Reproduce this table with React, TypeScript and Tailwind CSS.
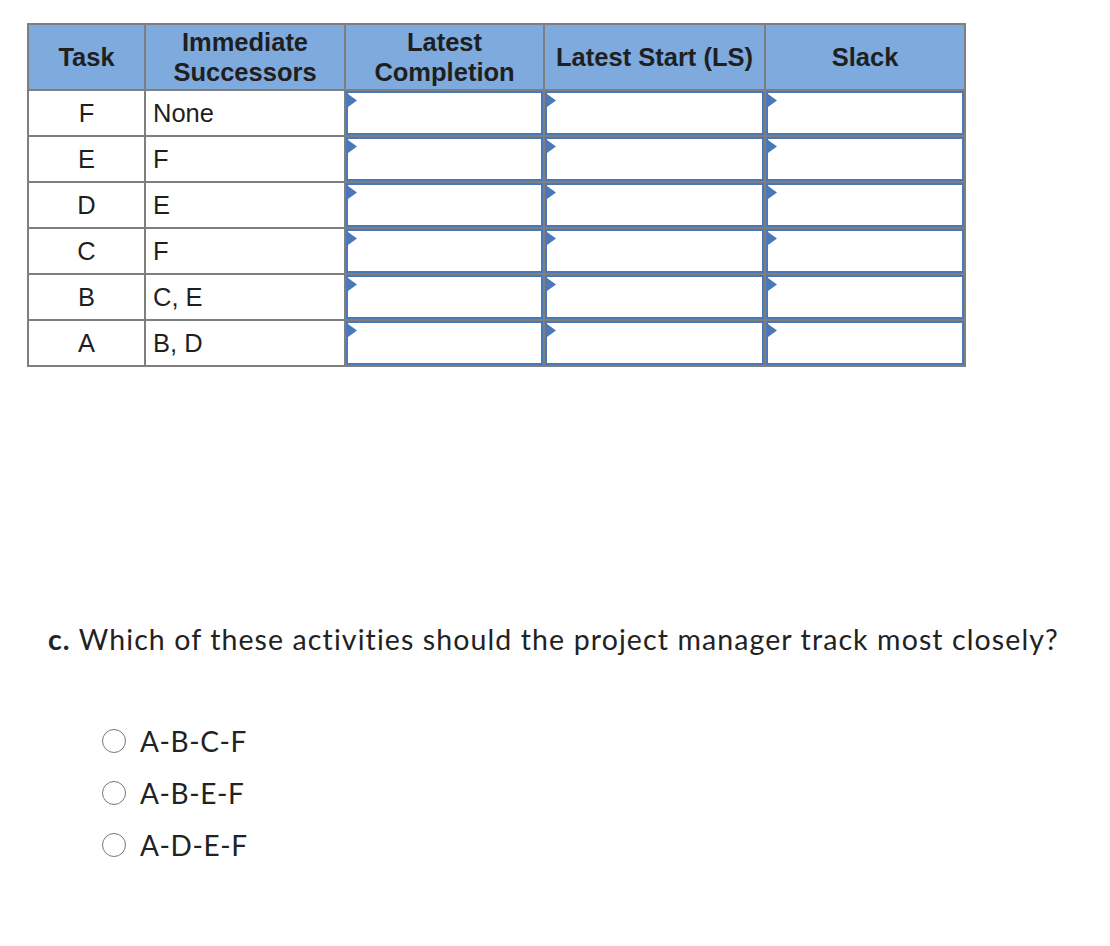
import React from "react";

const rows = [
  ["F", "None"],
  ["E", "F"],
  ["D", "E"],
  ["C", "F"],
  ["B", "C, E"],
  ["A", "B, D"],
];

function InputCell() {
  return (
    <div className="relative h-full w-full border-2 border-[#4a78b8] bg-white">
      <svg className="absolute left-0 top-[1px]" width="9" height="13" viewBox="0 0 9 13">
        <polygon points="0,0 9,6.5 0,13" fill="#4a78b8" />
      </svg>
    </div>
  );
}

function Radio({ label }: { label: string }) {
  return (
    <div className="flex items-center h-[52px]">
      <div className="w-[24px] h-[24px] rounded-full border-[1.5px] border-[#767676] bg-white" />
      <span className="ml-[14px] text-[28px] tracking-[0.6px] text-[#222]">{label}</span>
    </div>
  );
}

export default function App() {
  return (
    <div className="w-[1110px] h-[946px] bg-white" style={{ fontFamily: "'Liberation Sans', Arial, sans-serif" }}>
      <div className="pt-[23px] pl-[27px]">
        <div
          className="inline-grid bg-[#7f7f7f] p-[2px] gap-[2px] text-[#1f1f1f]"
          style={{
            gridTemplateColumns: "115px 198px 197px 219px 198px",
            gridTemplateRows: "64px repeat(6, 44px)",
          }}
        >
          <div className="bg-[#7eaade] flex items-center justify-center font-bold text-[25.5px] leading-[30px] text-center">Task</div>
          <div className="bg-[#7eaade] flex items-center justify-center font-bold text-[25.5px] leading-[30px] text-center">Immediate<br />Successors</div>
          <div className="bg-[#7eaade] flex items-center justify-center font-bold text-[25.5px] leading-[30px] text-center">Latest<br />Completion</div>
          <div className="bg-[#7eaade] flex items-center justify-center font-bold text-[25.5px] leading-[30px] text-center">Latest Start (LS)</div>
          <div className="bg-[#7eaade] flex items-center justify-center font-bold text-[25.5px] leading-[30px] text-center">Slack</div>
          {rows.map(([t, s]) => (
            <React.Fragment key={t + s}>
              <div className="bg-white flex items-center justify-center text-[25.5px]">{t}</div>
              <div className="bg-white flex items-center pl-[7px] text-[25.5px]">{s}</div>
              <InputCell />
              <InputCell />
              <InputCell />
            </React.Fragment>
          ))}
        </div>
      </div>
      <div className="mt-[253px] pl-[48px] text-[28.5px] leading-[39px] tracking-[1.1px] text-[#222] whitespace-nowrap" style={{ fontFamily: "Lato, 'Noto Sans', sans-serif" }}>
        <span className="font-bold">c.</span> Which of these activities should the project manager track most closely?
      </div>
      <div className="mt-[56px] pl-[102px]" style={{ fontFamily: "Lato, 'Noto Sans', sans-serif" }}>
        <Radio label="A-B-C-F" />
        <Radio label="A-B-E-F" />
        <Radio label="A-D-E-F" />
      </div>
    </div>
  );
}
